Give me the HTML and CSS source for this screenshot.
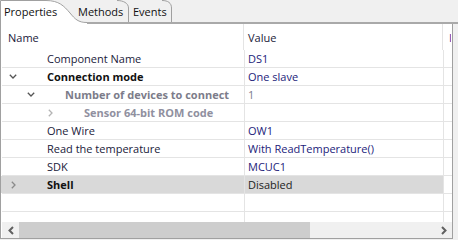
FILE: index.html
```html
<!DOCTYPE html>
<html lang="en">
<head>
  <meta charset="UTF-8" />
  <title>Properties</title>
  <link rel="stylesheet" href="styles.css">
</head>
<body>
  <div class="view">
    <div class="tabs">
      <svg class="tab-shapes" width="458" height="24" viewBox="0 0 458 24">
        <rect x="80" y="22" width="378" height="2" fill="#a9a9a9"/>
        <path d="M0 24 V0 H46 C60 0 64 6 70 13 C75 19 78 22 87 22 V24 Z" fill="#fff"/>
        <path d="M0.5 24 V0.5 H46 C59 0.5 64 6 70 13 C75 19 78 22.5 87 22.5" fill="none" stroke="#a0a0a0"/>
        <path d="M117 0.5 C123 0.5 128.5 3 128.5 8 V22" fill="none" stroke="#a0a0a0"/>
        <path d="M162 0.5 C168 0.5 171.5 3 171.5 8 V22" fill="none" stroke="#a0a0a0"/>
      </svg>
      <span class="tab tab-props">Properties</span>
      <span class="tab tab-methods">Methods</span>
      <span class="tab tab-events">Events</span>
    </div>

    <div class="body">
      <div class="panel">
        <div class="table">
          <div class="row head">
            <div class="cell name">Name</div>
            <div class="cell value">Value</div>
            <div class="cell extra"><span>Info</span></div>
          </div>

          <div class="row">
            <div class="cell name lvl0"><span class="toggle"></span>Component Name</div>
            <div class="cell value">DS1</div>
            <div class="cell extra"></div>
          </div>
          <div class="row">
            <div class="cell name lvl0 bold">
              <span class="toggle"><svg width="8" height="5" viewBox="0 0 8 5"><polyline points="0.8,0.8 4,4 7.2,0.8" fill="none" stroke="#555" stroke-width="1.3"/></svg></span>Connection mode
            </div>
            <div class="cell value">One slave</div>
            <div class="cell extra"></div>
          </div>
          <div class="row">
            <div class="cell name lvl1 bold muted">
              <span class="toggle"><svg width="8" height="5" viewBox="0 0 8 5"><polyline points="0.8,0.8 4,4 7.2,0.8" fill="none" stroke="#555" stroke-width="1.3"/></svg></span>Number of devices to connect
            </div>
            <div class="cell value muted">1</div>
            <div class="cell extra"></div>
          </div>
          <div class="row">
            <div class="cell name lvl2 bold faint">
              <span class="toggle"><svg width="5" height="8" viewBox="0 0 5 8"><polyline points="0.8,0.8 4,4 0.8,7.2" fill="none" stroke="#b4b4b4" stroke-width="1.3"/></svg></span>Sensor 64-bit ROM code
            </div>
            <div class="cell value"></div>
            <div class="cell extra"></div>
          </div>
          <div class="row">
            <div class="cell name lvl0"><span class="toggle"></span>One Wire</div>
            <div class="cell value">OW1</div>
            <div class="cell extra"></div>
          </div>
          <div class="row">
            <div class="cell name lvl0"><span class="toggle"></span>Read the temperature</div>
            <div class="cell value">With ReadTemperature()</div>
            <div class="cell extra"></div>
          </div>
          <div class="row">
            <div class="cell name lvl0"><span class="toggle"></span>SDK</div>
            <div class="cell value">MCUC1</div>
            <div class="cell extra"></div>
          </div>
          <div class="row selected">
            <div class="cell name lvl0 bold">
              <span class="toggle"><svg width="5" height="8" viewBox="0 0 5 8"><polyline points="0.8,0.8 4,4 0.8,7.2" fill="none" stroke="#8a8a8a" stroke-width="1.3"/></svg></span>Shell
            </div>
            <div class="cell value">Disabled</div>
            <div class="cell extra"></div>
          </div>
          <div class="row">
            <div class="cell name"></div>
            <div class="cell value"></div>
            <div class="cell extra"></div>
          </div>
          <div class="row filler">
            <div class="cell name"></div>
            <div class="cell value"></div>
            <div class="cell extra"></div>
          </div>
        </div>

        <div class="hscroll">
          <span class="arrow"><svg width="6" height="9" viewBox="0 0 6 9"><polyline points="5,1 1.5,4.5 5,8" fill="none" stroke="#606060" stroke-width="2"/></svg></span>
          <div class="track"><div class="thumb"></div></div>
          <span class="arrow"><svg width="6" height="9" viewBox="0 0 6 9"><polyline points="1,1 4.5,4.5 1,8" fill="none" stroke="#606060" stroke-width="2"/></svg></span>
        </div>
      </div>
    </div>
  </div>
</body>
</html>
```

FILE: styles.css
```css
body {
  margin: 0;
  background-color: #f0f0f0;
  font-family: "Segoe UI", "Open Sans", sans-serif;
  font-size: 11px;
  color: #1a1a3a;
}
.view {
  width: 458px;
  height: 240px;
  display: flex;
  flex-direction: column;
}
.tabs {
  position: relative;
  height: 24px;
  display: flex;
  align-items: flex-start;
}
.tab-shapes {
  position: absolute;
  left: 0;
  top: 0;
}
.tab {
  position: relative;
  height: 22px;
  line-height: 24px;
  color: #111;
}
.tab-props {
  width: 74px;
  padding-left: 4px;
}
.tab-methods {
  width: 55px;
}
.tab-events {
  width: 40px;
}
.body {
  display: flex;
  height: 216px;
}
.panel {
  width: 451px;
  height: 214px;
  background: #fff;
  border-left: 1px solid #a0a0a0;
  border-right: 1px solid #a0a0a0;
  border-bottom: 1px solid #a0a0a0;
  display: flex;
  flex-direction: column;
}
.table {
  display: flex;
  flex-direction: column;
  flex: 1;
}
.row {
  display: grid;
  grid-template-columns: 243px 199px 1fr;
  height: 17px;
  border-bottom: 1px solid #e4e4e4;
  margin-left: 1px;
}
.row.head {
  height: 26px;
  border-bottom: none;
  margin-left: 0;
}
.row.head .cell {
  line-height: 27px;
}
.row.filler {
  height: 10px;
  border-bottom: none;
}
.cell {
  display: flex;
  align-items: center;
  border-right: 1px solid #e4e4e4;
  white-space: nowrap;
  overflow: hidden;
}
.row:not(.head) .name {
  margin-left: -1px;
}
.head .name {
  padding-left: 7px;
}
.value {
  padding-left: 3px;
  color: #23237a;
}
.head .value {
  padding-left: 4px;
  color: #1a1a3a;
}
.extra {
  border-right: none;
  padding-left: 6px;
  color: #5a2a9a;
}
.extra span {
  display: block;
  width: 2px;
  overflow: hidden;
}
.toggle {
  width: 16px;
  height: 17px;
  margin-right: 26px;
  display: flex;
  align-items: center;
  justify-content: center;
}
.lvl0 { padding-left: 4px; }
.lvl1 { padding-left: 22px; }
.lvl2 { padding-left: 41px; }
.bold {
  font-weight: bold;
  color: #111;
}
.muted {
  color: #7c7c8a;
}
.faint {
  color: #9090a0;
}
.selected .name,
.selected .value {
  background: #d9d9d9;
}
.selected .value {
  color: #222;
}
.hscroll {
  height: 16px;
  margin-left: 1px;
  background: #f0f0f0;
  display: flex;
  align-items: center;
}
.arrow {
  width: 17px;
  display: flex;
  justify-content: center;
}
.track {
  flex: 1;
  height: 16px;
}
.thumb {
  width: 291px;
  height: 16px;
  background: #cdcdcd;
}
```
